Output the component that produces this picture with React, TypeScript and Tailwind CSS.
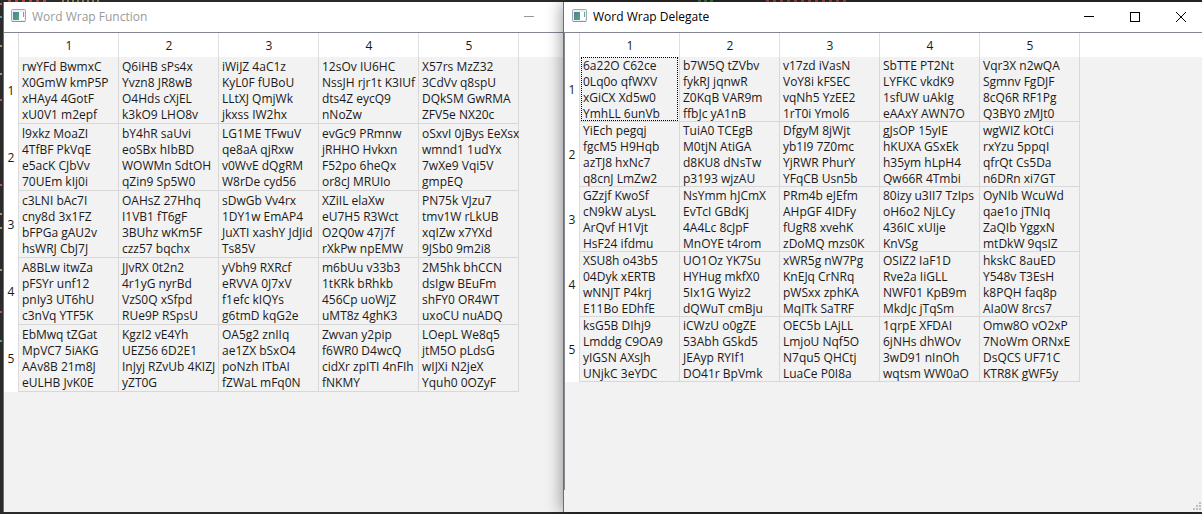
import clsx from "clsx";

interface WordTableProps {
  rows: string[][];
  padded?: boolean;
  focusFirst?: boolean;
}

interface WindowProps extends WordTableProps {
  title: string;
  active?: boolean;
  className?: string;
}

// Every cell holds its wrapped lines, split by "|"
const functionRows: string[][] = [
  [
    "rwYFd BwmxC|X0GmW kmP5P|xHAy4 4GotF|xU0V1 m2epf",
    "Q6iHB sPs4x|Yvzn8 JR8wB|O4Hds cXjEL|k3kO9 LHO8v",
    "iWiJZ 4aC1z|KyL0F fUBoU|LLtXJ QmjWk|jkxss IW2hx",
    "12sOv IU6HC|NssJH rjr1t K3IUf|dts4Z eycQ9|nNoZw",
    "X57rs MzZ32|3CdVv q8spU|DQkSM GwRMA|ZFV5e NX20c",
  ],
  [
    "l9xkz MoaZI|4TfBF PkVqE|e5acK CJbVv|70UEm kIj0i",
    "bY4hR saUvi|eoSBx hIbBD|WOWMn SdtOH|qZin9 Sp5W0",
    "LG1ME TFwuV|qe8aA qjRxw|v0WvE dQgRM|W8rDe cyd56",
    "evGc9 PRmnw|jRHHO Hvkxn|F52po 6heQx|or8cJ MRUIo",
    "oSxvI 0jBys EeXsx|wmnd1 1udYx|7wXe9 Vqi5V|gmpEQ",
  ],
  [
    "c3LNI bAc7I|cny8d 3x1FZ|bFPGa gAU2v|hsWRJ CbJ7J",
    "OAHsZ 27Hhq|I1VB1 fT6gF|3BUhz wKm5F|czz57 bqchx",
    "sDwGb Vv4rx|1DY1w EmAP4|JuXTI xashY JdJid|Ts85V",
    "XZiIL elaXw|eU7H5 R3Wct|O2Q0w 47j7f|rXkPw npEMW",
    "PN75k VJzu7|tmv1W rLkUB|xqIZw x7YXd|9JSb0 9m2i8",
  ],
  [
    "A8BLw itwZa|pFSYr unf12|pnIy3 UT6hU|c3nVq YTF5K",
    "JJvRX 0t2n2|4r1yG nyrBd|VzS0Q xSfpd|RUe9P RSpsU",
    "yVbh9 RXRcf|eRVVA 0J7xV|f1efc kIQYs|g6tmD kqG2e",
    "m6bUu v33b3|1tKRk bRhkb|456Cp uoWjZ|uMT8z 4ghK3",
    "2M5hk bhCCN|dsIgw BEuFm|shFY0 OR4WT|uxoCU nuADQ",
  ],
  [
    "EbMwq tZGat|MpVC7 5iAKG|AAv8B 21m8J|eULHB JvK0E",
    "KgzI2 vE4Yh|UEZ56 6D2E1|InJyj RZvUb 4KIZJ|yZT0G",
    "OA5g2 znIIq|ae1ZX bSxO4|poNzh ITbAI|fZWaL mFq0N",
    "Zwvan y2pip|f6WR0 D4wcQ|cidXr zpITI 4nFIh|fNKMY",
    "LOepL We8q5|jtM5O pLdsG|wIJXi N2jeX|Yquh0 0OZyF",
  ],
];

const delegateRows: string[][] = [
  [
    "6a22O C62ce|0Lq0o qfWXV|xGiCX Xd5w0|YmhLL 6unVb",
    "b7W5Q tZVbv|fykRJ jqnwR|Z0KqB VAR9m|ffbJc yA1nB",
    "v17zd iVasN|VoY8i kFSEC|vqNh5 YzEE2|1rT0i Ymol6",
    "SbTTE PT2Nt|LYFKC vkdK9|1sfUW uAkIg|eAAxY AWN7O",
    "Vqr3X n2wQA|Sgmnv FgDJF|8cQ6R RF1Pg|Q3BY0 zMJt0",
  ],
  [
    "YiEch pegqj|fgcM5 H9Hqb|azTJ8 hxNc7|q8cnJ LmZw2",
    "TuiA0 TCEgB|M0tjN AtiGA|d8KU8 dNsTw|p3193 wjzAU",
    "DfgyM 8jWjt|yb1I9 7Z0mc|YjRWR PhurY|YFqCB Usn5b",
    "gJsOP 15yIE|hKUXA GSxEk|h35ym hLpH4|Qw66R 4Tmbi",
    "wgWIZ kOtCi|rxYzu 5ppqI|qfrQt Cs5Da|n6DRn xi7GT",
  ],
  [
    "GZzjf KwoSf|cN9kW aLysL|ArQvf H1Vjt|HsF24 ifdmu",
    "NsYmm hJCmX|EvTcI GBdKj|4A4Lc 8cJpF|MnOYE t4rom",
    "PRm4b eJEfm|AHpGF 4IDFy|fUgR8 xvehK|zDoMQ mzs0K",
    "80izy u3II7 TzIps|oH6o2 NjLCy|436IC xUIje|KnVSg",
    "OyNIb WcuWd|qae1o jTNIq|ZaQIb YggxN|mtDkW 9qsIZ",
  ],
  [
    "XSU8h o43b5|04Dyk xERTB|wNNJT P4krj|E11Bo EDhfE",
    "UO1Oz YK7Su|HYHug mkfX0|5Ix1G Wyiz2|dQWuT cmBju",
    "xWR5g nW7Pg|KnEJq CrNRq|pWSxx zphKA|MqITk SaTRF",
    "OSIZ2 IaF1D|Rve2a IiGLL|NWF01 KpB9m|MkdJc jTqSm",
    "hkskC 8auED|Y548v T3EsH|k8PQH faq8p|AIa0W 8rcs7",
  ],
  [
    "ksG5B DIhj9|Lmddg C9OA9|yIGSN AXsJh|UNjkC 3eYDC",
    "iCWzU o0gZE|53Abh GSkd5|JEAyp RYIf1|DO41r BpVmk",
    "OEC5b LAjLL|LmjoU Nqf5O|N7qu5 QHCtj|LuaCe P0I8a",
    "1qrpE XFDAI|6jNHs dhWOv|3wD91 nInOh|wqtsm WW0aO",
    "Omw8O vO2xP|7NoWm ORNxE|DsQCS UF71C|KTR8K gWF5y",
  ],
];

const AppIcon = () => (
  <svg width="16" height="16" viewBox="0 0 16 16" aria-hidden="true">
    <defs>
      <linearGradient id="pane" x1="0" y1="0" x2="1" y2="1">
        <stop offset="0" stopColor="#4a7fa5" />
        <stop offset="1" stopColor="#55a878" />
      </linearGradient>
    </defs>
    <rect x="0.5" y="0.5" width="14" height="12" rx="1" fill="#eceef1" stroke="#a4a8ae" />
    <path d="M1 12.5H14" stroke="#8f949b" />
    <rect x="2" y="3" width="6" height="8" fill="url(#pane)" />
    <rect x="8" y="3" width="5" height="8" fill="#ffffff" />
    <path d="M12.5 3V8" stroke="#68a59c" />
  </svg>
);

const WordTable = ({ rows, padded, focusFirst }: WordTableProps) => (
  <table className="w-full table-fixed border-separate border-spacing-0 text-[12px] leading-4 text-[#1a1a1a]">
    <thead>
      <tr className="h-6 bg-white">
        <td className="w-[15px] border-r border-[#dcdcdc] p-0" />
        {rows[0].map((_, i) => (
          <th
            key={i}
            scope="col"
            className="w-[100px] border-r border-[#e0e0e0] p-0 pt-0.5 pl-px font-normal"
          >
            {i + 1}
          </th>
        ))}
        <td className="p-0" />
      </tr>
    </thead>
    <tbody>
      {rows.map((row, i) => (
        <tr key={i}>
          <th
            scope="row"
            className="border-r border-[#dcdcdc] bg-white p-0 text-center font-normal"
          >
            {i + 1}
          </th>
          {row.map((cell, j) => (
            <td
              key={j}
              className={clsx(
                "relative border-r border-b border-[#d8d8d8] px-[3px] align-top whitespace-nowrap",
                padded ? "pt-0.5 pb-px" : "pt-px pb-0"
              )}
            >
              <div className="-mb-px">
                {cell.split("|").map((line) => (
                  <div key={line}>{line}</div>
                ))}
              </div>
              {focusFirst && i === 0 && j === 0 && (
                <span className="absolute inset-y-0 right-px left-px border border-dotted border-black" />
              )}
            </td>
          ))}
        </tr>
      ))}
    </tbody>
  </table>
);

const TitleBar = ({ title, active }: { title: string; active?: boolean }) => (
  <header
    className={clsx(
      "flex h-[30px] shrink-0 items-center bg-white",
      active ? "pl-2 text-black" : "pl-[7px] text-[#999999]"
    )}
  >
    <AppIcon />
    <h1 className="ml-[5px] grow text-[12px] leading-4">{title}</h1>
    <button aria-label="Minimize" className="flex h-full w-[46px] items-center justify-center">
      <svg width="10" height="10" stroke="currentColor" fill="none">
        <path d="M0 4.5H10" />
      </svg>
    </button>
    <button aria-label="Maximize" className="flex h-full w-[46px] items-center justify-center">
      <svg width="10" height="10" stroke="currentColor" fill="none">
        <rect x="0.5" y="0.5" width="9" height="9" />
      </svg>
    </button>
    <button aria-label="Close" className="flex h-full w-[46px] items-center justify-center">
      <svg width="10" height="10" stroke="currentColor" fill="none">
        <path d="M0 0L10 10M10 0L0 10" />
      </svg>
    </button>
  </header>
);

const SizeGrip = () => (
  <svg width="8" height="8" fill="#bfbfbf" aria-hidden="true">
    <path d="M6 0h2v2h-2zM3 3h2v2h-2zM6 3h2v2h-2zM0 6h2v2h-2zM3 6h2v2h-2zM6 6h2v2h-2z" />
  </svg>
);

const Window = ({ title, active, className, ...table }: WindowProps) => (
  <section
    className={clsx(
      "absolute top-0.5 bottom-0.5 flex flex-col border-l border-[#6b6f75] bg-[#f2f2f2]",
      className
    )}
  >
    <TitleBar title={title} active={active} />
    <div
      className={clsx(
        "grow border-t border-[#828790]",
        active && "border-l"
      )}
    >
      <WordTable {...table} />
    </div>
    <footer className="flex h-[22px] items-end justify-end pr-[3px] pb-0.5">
      <SizeGrip />
    </footer>
  </section>
);

// Slivers of the code editor that stay visible around the windows
const EditorBackdrop = () => (
  <svg className="absolute inset-0 h-full w-full" aria-hidden="true">
    <g fill="none" strokeWidth="2">
      <path stroke="#4a9a9a" d="M0 17h2M0 341h2" />
      <path stroke="#a39a70" d="M0 46h2M0 74h2M0 270h2M0 214h2M0 228h2" />
      <path stroke="#b05a5a" d="M0 4h2M0 100h2M0 185h2M0 312h2" />
      <path stroke="#a8483f" strokeDasharray="3 4" d="M8 1h40M766 1h80" />
      <path stroke="#8a7d55" strokeDasharray="2 3" d="M62 1h38" />
      <path stroke="#3f7a45" strokeDasharray="3 3" d="M698 1h16" />
    </g>
  </svg>
);

const App = () => {
  return (
    <main className="relative h-screen overflow-hidden bg-[#2b2b2b] font-['Open_Sans','Noto_Sans',sans-serif]">
      <EditorBackdrop />
      <Window
        title="Word Wrap Function"
        rows={functionRows}
        padded
        className="left-[3px] w-[641px]"
      />
      <Window
        title="Word Wrap Delegate"
        active
        rows={delegateRows}
        focusFirst
        className="-right-0.5 left-[563px] shadow-[0_0_16px_rgba(0,0,0,0.45)]"
      />
    </main>
  );
};

export default App;
